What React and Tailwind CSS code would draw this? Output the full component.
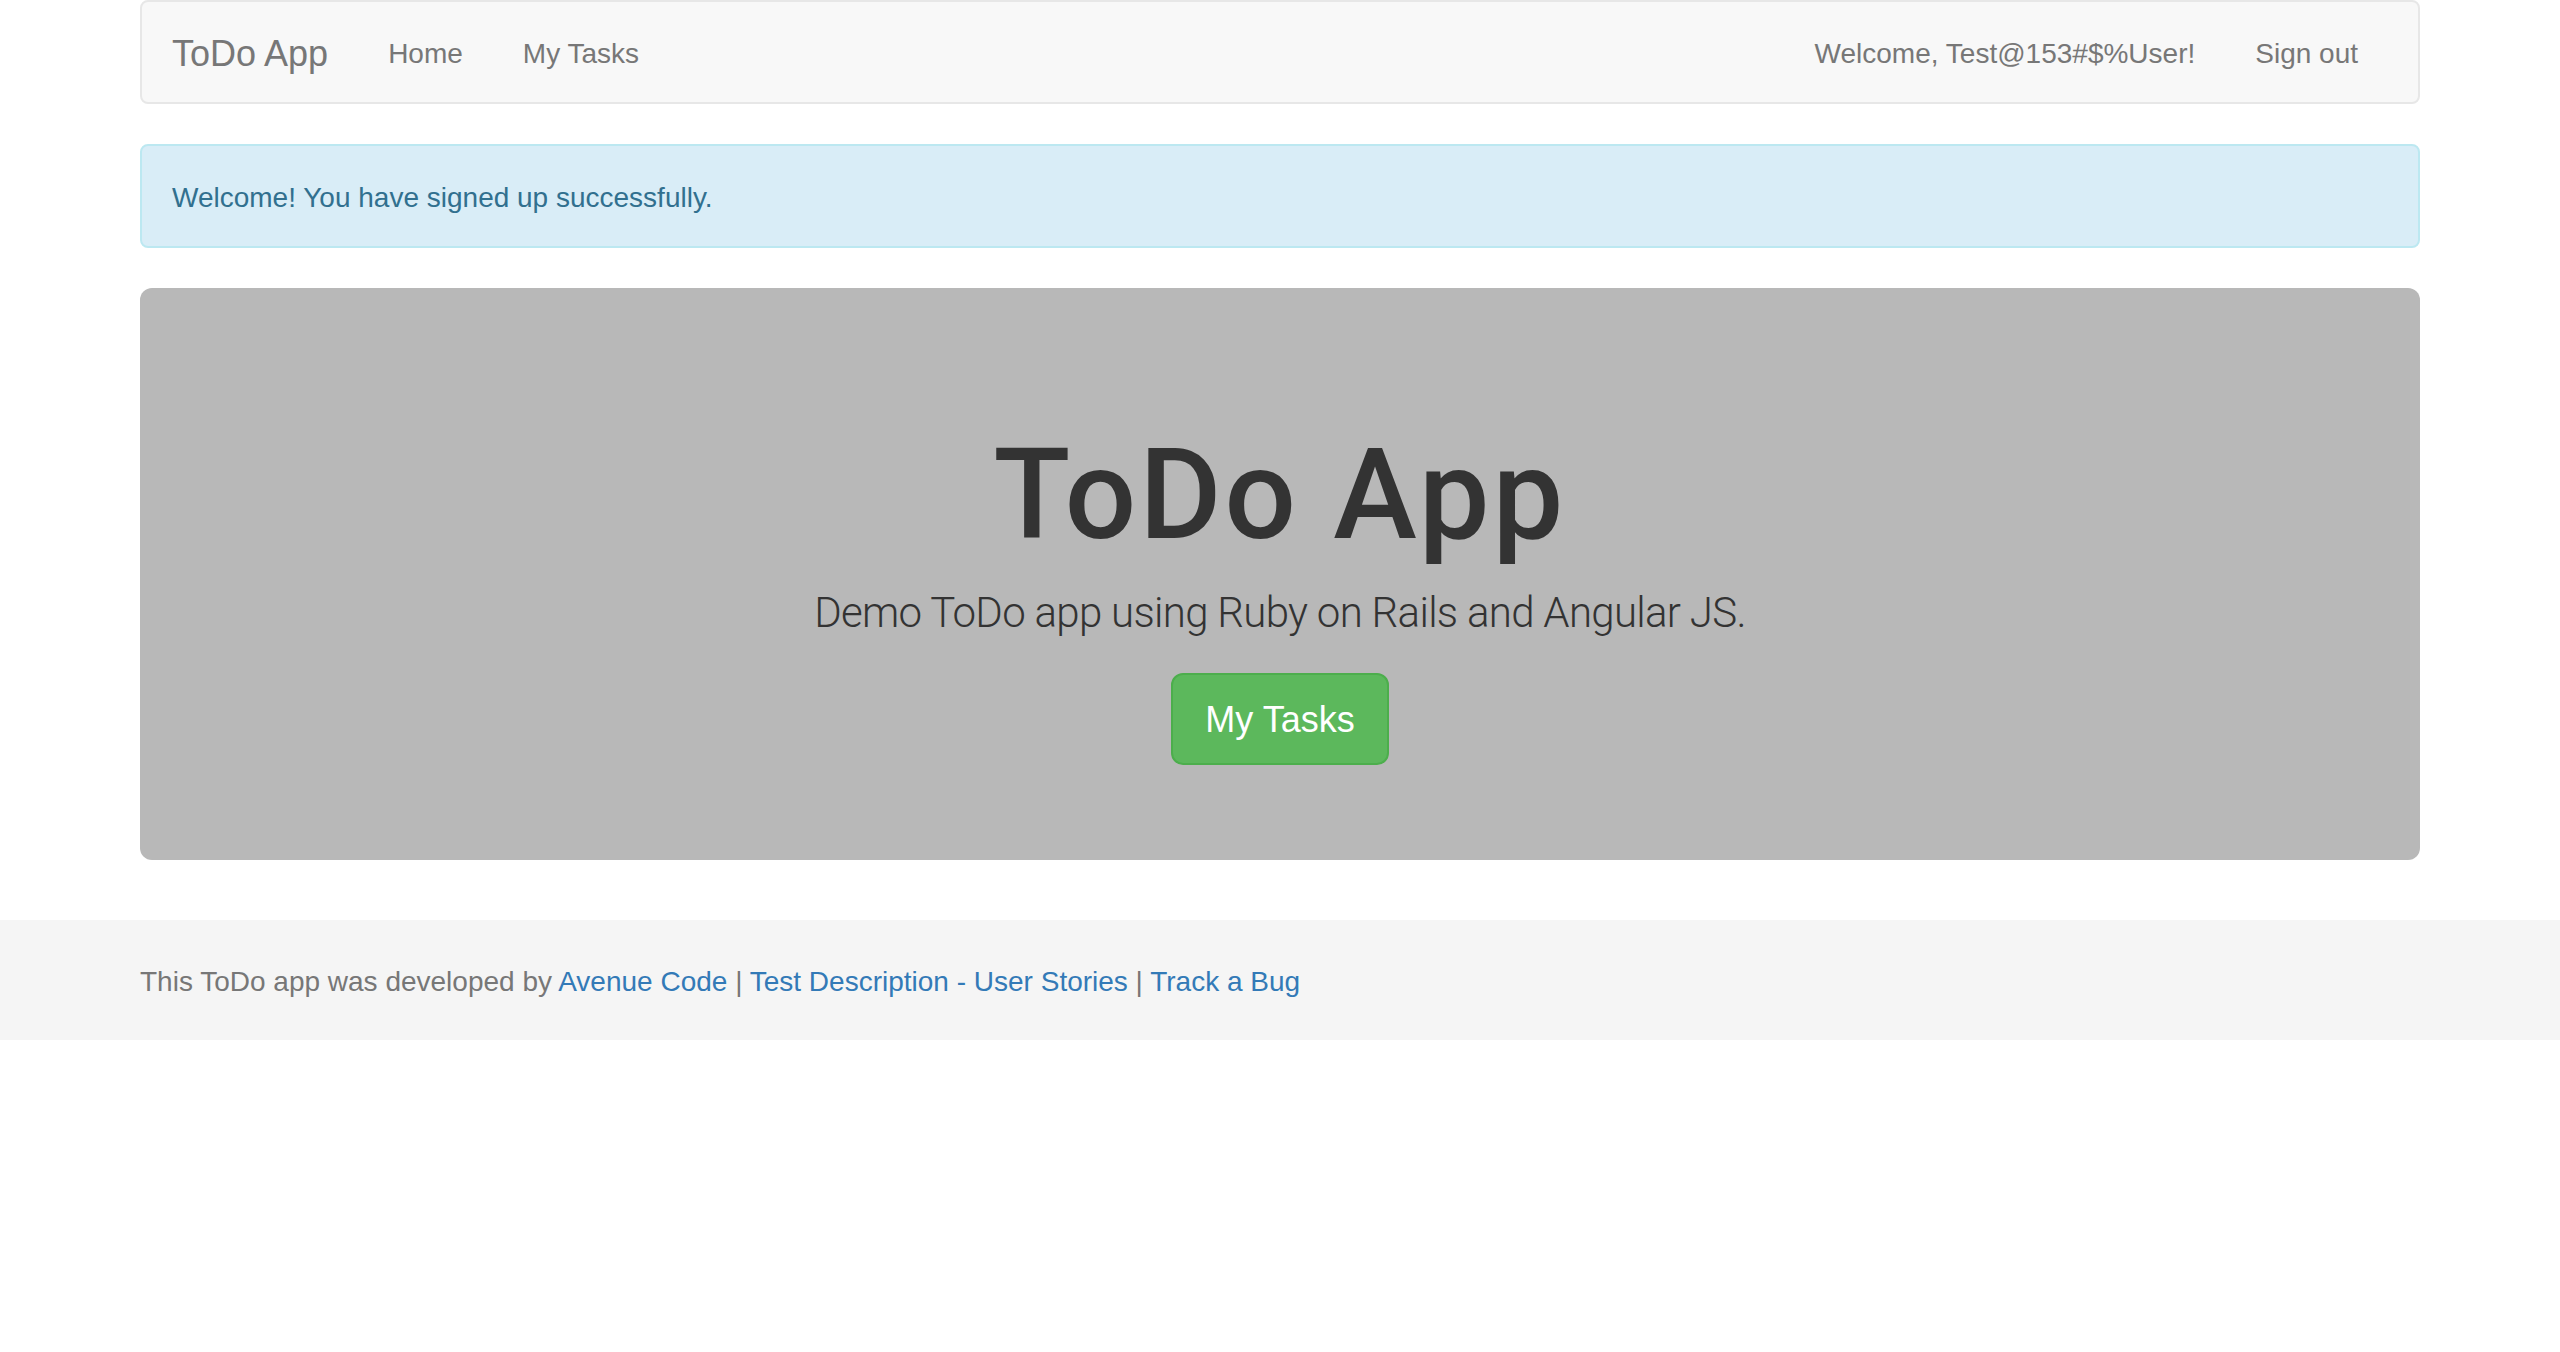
import React from "react";

const font = { fontFamily: '"Liberation Sans", Arial, Helvetica, sans-serif' };

const App = () => {
  return (
    <div className="min-h-screen bg-white text-[#333]" style={font}>
      <div className="w-[2280px] mx-auto">
        {/* Navbar */}
        <nav className="h-[104px] border-2 border-[#e7e7e7] bg-[#f8f8f8] rounded-[8px] flex text-[#777]">
          <a href="#" className="px-[30px] pt-[32px] pb-[28px] text-[36px] leading-[40px]">ToDo App</a>
          <a href="#" className="px-[30px] pt-[32px] pb-[28px] text-[28px] leading-[40px]">Home</a>
          <a href="#" className="px-[30px] pt-[32px] pb-[28px] text-[28px] leading-[40px]">My Tasks</a>
          <div className="ml-auto flex pr-[30px]">
            <a href="#" className="px-[30px] pt-[32px] pb-[28px] text-[28px] leading-[40px]">Welcome, Test@153#$%User!</a>
            <a href="#" className="px-[30px] pt-[32px] pb-[28px] text-[28px] leading-[40px]">Sign out</a>
          </div>
        </nav>

        {/* Alert */}
        <div className="mt-[40px] border-2 border-[#bce8f1] bg-[#d9edf7] text-[#31708f] rounded-[8px] px-[30px] pt-[32px] pb-[28px] text-[28px] leading-[40px]">
          Welcome! You have signed up successfully.
        </div>

        {/* Jumbotron */}
        <div className="mt-[40px] bg-[#b8b8b8] rounded-[12px] pt-[96px] pb-[95px] text-center">
          <h1
            className="mt-[42px] mb-[18px] text-[126px] leading-[138.6px] font-medium text-[#333] tracking-[3px]"
            style={{ fontFamily: 'Roboto, "Liberation Sans", sans-serif' }}
          >
            ToDo App
          </h1>
          <p
            className="text-[42px] leading-[60px] mb-[30px] font-light text-[#333] tracking-[-0.7px]"
            style={{ fontFamily: 'Roboto, "Liberation Sans", sans-serif' }}
          >
            Demo ToDo app using Ruby on Rails and Angular JS.
          </p>
          <div>
            <a href="#" className="inline-block bg-[#5cb85c] border-2 border-[#4cae4c] text-white rounded-[12px] px-[32px] pt-[21px] pb-[19px] text-[36px] leading-[48px]">
              My Tasks
            </a>
          </div>
        </div>
      </div>

      {/* Footer */}
      <footer className="mt-[60px] bg-[#f5f5f5]">
        <div className="w-[2280px] mx-auto pt-[42px] pb-[38px] text-[28px] leading-[40px] text-[#777]">
          This ToDo app was developed by{" "}
          <a href="#" className="text-[#337ab7]">Avenue Code</a> |{" "}
          <a href="#" className="text-[#337ab7]">Test Description - User Stories</a> |{" "}
          <a href="#" className="text-[#337ab7]">Track a Bug</a>
        </div>
      </footer>
    </div>
  );
};

export default App;
